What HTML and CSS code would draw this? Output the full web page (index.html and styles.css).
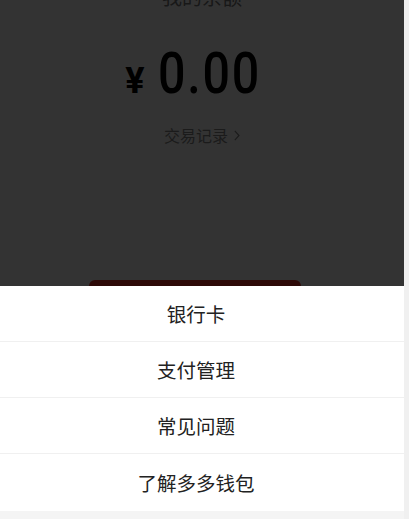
FILE: index.html
```html
<!DOCTYPE html>
<html lang="zh-CN">
<head>
<meta charset="utf-8">
<title>我的余额</title>
<link rel="stylesheet" href="styles.css">
</head>
<body>
<div class="viewport">
  <div class="page">
    <div class="title">我的余额</div>
    <div class="amount">
      <span class="yen">¥</span><span class="digits">0.00</span>
    </div>
    <div class="records">交易记录
      <svg class="chev" width="6" height="11" viewBox="0 0 6 11"><path d="M0.8 0.8 L5 5.5 L0.8 10.2" fill="none" stroke="currentColor" stroke-width="1.2"/></svg>
    </div>
    <div class="withdraw"></div>
  </div>
  <div class="mask"></div>
  <div class="sheet">
    <div class="row">银行卡</div>
    <div class="row">支付管理</div>
    <div class="row">常见问题</div>
    <div class="row last">了解多多钱包</div>
    <div class="sheet-foot"></div>
  </div>
</div>
<div class="scrollbar"></div>
</body>
</html>
```

FILE: styles.css
```css
html, body {
  margin: 0;
  padding: 0;
}
body {
  display: flex;
  height: 519px;
  overflow: hidden;
  font-family: "Noto Sans CJK SC", "Noto Sans", sans-serif;
  background: #fff;
}
.viewport {
  flex: 0 0 404px;
  position: relative;
  overflow: hidden;
  background: #fff;
}
.page {
  display: flex;
  flex-direction: column;
}
.title {
  margin-top: -16px;
  height: 26px;
  line-height: 26px;
  font-size: 20px;
  color: #777;
  text-align: center;
}
.amount {
  margin-top: 36px;
  height: 56px;
  display: flex;
  justify-content: center;
  align-items: baseline;
  padding-right: 16px;
  color: #000;
  font-family: Roboto, "Liberation Sans", sans-serif;
}
.yen {
  font-size: 36px;
  font-weight: 700;
  line-height: 56px;
  margin-right: 13px;
}
.digits {
  display: inline-block;
  font-size: 57px;
  font-weight: 500;
  line-height: 56px;
  letter-spacing: 2px;
  transform: scaleX(0.85);
  transform-origin: left center;
  margin-right: -16px;
}
.records {
  margin-top: 23px;
  height: 20px;
  line-height: 20px;
  font-size: 16px;
  color: #888;
  display: flex;
  justify-content: center;
  align-items: center;
  gap: 6px;
}
.chev {
  display: block;
}
.withdraw {
  margin-top: 135px;
  margin-left: 89px;
  width: 212px;
  height: 44px;
  border-radius: 6px;
  background: #e02e24;
}
.mask {
  position: absolute;
  inset: 0;
  background: rgba(0, 0, 0, 0.8);
}
.sheet {
  position: absolute;
  left: 0;
  right: 0;
  bottom: 0;
  background: #fff;
  display: flex;
  flex-direction: column;
}
.row {
  height: 55px;
  border-bottom: 1px solid #f0f0f0;
  display: flex;
  align-items: center;
  justify-content: center;
  padding-right: 12px;
  font-size: 19.5px;
  color: #222;
}
.row.last {
  height: 57px;
  border-bottom: 0;
}
.sheet-foot {
  height: 8px;
  background: #f4f4f4;
}
.scrollbar {
  flex: 1;
  background: #f0f0f0;
}
```
